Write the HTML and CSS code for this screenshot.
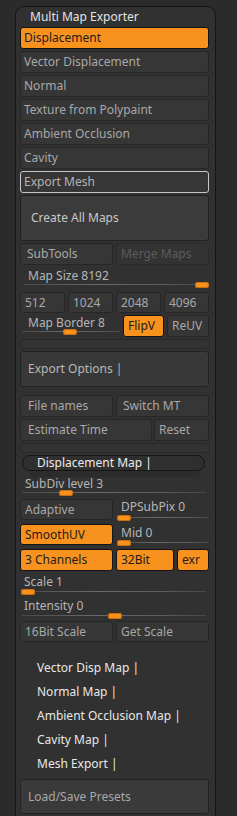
FILE: index.html
```html
<!DOCTYPE html>
<html>
<head>
<meta charset="utf-8">
<link rel="stylesheet" href="styles.css">
</head>
<body>
<div class="panel">
  <div class="title">Multi Map Exporter</div>
  <div class="list">
    <div class="btn on">Displacement</div>
    <div class="btn">Vector Displacement</div>
    <div class="btn">Normal</div>
    <div class="btn">Texture from Polypaint</div>
    <div class="btn">Ambient Occlusion</div>
    <div class="btn">Cavity</div>
    <div class="btn outline">Export Mesh</div>
  </div>
  <div class="btn big mt2">Create All Maps</div>
  <div class="row mt2">
    <div class="btn half pad7">SubTools</div>
    <div class="btn half disabled">Merge Maps</div>
  </div>
  <div class="slider">
    <div class="label mt4 pl8">Map Size 8192</div>
    <div class="track size"><div class="thumb" style="left:175px"></div></div>
  </div>
  <div class="row mt4 gap3">
    <div class="btn quarter">512</div>
    <div class="btn quarter">1024</div>
    <div class="btn quarter">2048</div>
    <div class="btn quarter">4096</div>
  </div>
  <div class="row mt2 gap3">
    <div class="slider grow">
      <div class="label mt1 pl8">Map Border 8</div>
      <div class="track border"><div class="thumb" style="left:43px"></div></div>
    </div>
    <div class="btn on tall w41">FlipV</div>
    <div class="btn tall w42">ReUV</div>
  </div>
  <div class="bar mt2"></div>
  <div class="btn box mt2">Export Options |</div>
  <div class="row mt8">
    <div class="btn half pad8">File names</div>
    <div class="btn half pad7">Switch MT</div>
  </div>
  <div class="row mt2 gap2">
    <div class="btn w132 pad8">Estimate Time</div>
    <div class="btn w55">Reset</div>
  </div>
  <div class="bar mt2"></div>
  <div class="pill mt2">Displacement Map |</div>
  <div class="shade"></div>
  <div class="slider">
    <div class="label pl5">SubDiv level 3</div>
    <div class="track wide"><div class="thumb" style="left:39px"></div></div>
  </div>
  <div class="row mt3">
    <div class="btn half short">Adaptive</div>
    <div class="slider half">
      <div class="label mt1 pl5">DPSubPix 0</div>
      <div class="track side mt1"><div class="thumb" style="left:1px"></div></div>
    </div>
  </div>
  <div class="row mt3">
    <div class="btn half short on">SmoothUV</div>
    <div class="slider half">
      <div class="label mt2 pl5">Mid 0</div>
      <div class="track side"><div class="thumb" style="left:1px"></div></div>
    </div>
  </div>
  <div class="row mt3 gap3">
    <div class="btn half on">3 Channels</div>
    <div class="btn on w58">32Bit</div>
    <div class="btn on w32">exr</div>
  </div>
  <div class="slider">
    <div class="label mt4 pl4">Scale 1</div>
    <div class="track wide"><div class="thumb" style="left:1px"></div></div>
  </div>
  <div class="slider">
    <div class="label mt4 pl4">Intensity 0</div>
    <div class="track wide"><div class="thumb" style="left:88px"></div></div>
  </div>
  <div class="row mt2">
    <div class="btn half short">16Bit Scale</div>
    <div class="btn half short">Get Scale</div>
  </div>
  <div class="sections">
    <div class="section">Vector Disp Map |</div>
    <div class="section">Normal Map |</div>
    <div class="section">Ambient Occlusion Map |</div>
    <div class="section">Cavity Map |</div>
    <div class="section">Mesh Export |</div>
  </div>
  <div class="btn box presets">Load/Save Presets</div>
</div>
</body>
</html>
```

FILE: styles.css
```css
html, body {
  margin: 0;
  padding: 0;
}
body {
  background: #2b2b2b;
  font-family: "Noto Sans", "Open Sans", sans-serif;
  font-size: 12px;
  height: 816px;
  overflow: hidden;
}
.panel {
  margin: 6px 0 0 15px;
  width: 201px;
  height: 810px;
  box-sizing: border-box;
  border: 1px solid #151515;
  border-bottom: 0;
  border-radius: 9px 9px 0 0;
  background: #313131;
  padding: 0 6px 0 4px;
}
.title {
  height: 20px;
  line-height: 20px;
  padding-left: 10px;
  color: #e4e4e4;
}
.list {
  display: flex;
  flex-direction: column;
  gap: 2px;
}
.btn {
  box-sizing: border-box;
  height: 22px;
  line-height: 20px;
  border: 1px solid #262626;
  border-radius: 3px;
  background: #363636;
  color: #a8a8a8;
  padding-left: 3px;
  white-space: nowrap;
  overflow: hidden;
}
.btn.on {
  background: #f8921f;
  border-color: #141414;
  color: #1c1c1c;
}
.btn.outline {
  border-color: #c6c6c6;
  color: #b4b4b4;
}
.btn.disabled {
  color: #5c5c5c;
  background: #333333;
  border-color: #2b2b2b;
}
.btn.big {
  height: 46px;
  line-height: 44px;
  background: #3b3b3b;
  border-color: #222222;
  color: #c8c8c8;
  padding-left: 10px;
}
.btn.box {
  height: 36px;
  line-height: 34px;
  background: #383838;
  border-color: #222222;
  color: #b8b8b8;
  padding-left: 7px;
}
.btn.presets {
  margin-top: 3px;
  height: 35px;
  line-height: 33px;
  background: #3a3a3a;
  color: #a8a8a8;
}
.btn.short {
  height: 21px;
  line-height: 19px;
}
.btn.tall {
  height: 22px;
}
.row {
  display: flex;
  gap: 3px;
}
.row.gap2 { gap: 2px; }
.row.gap3 { gap: 3px; }
.half { width: 93px; flex: none; }
.quarter {
  width: 45px;
  height: 21px;
  line-height: 19px;
  flex: none;
}
.w41 { width: 41px; flex: none; }
.w42 { width: 42px; flex: none; }
.w55 { width: 55px; flex: none; }
.w58 { width: 58px; flex: none; }
.w32 { width: 32px; flex: none; }
.w132 { width: 132px; flex: none; }
.grow { flex: 1; min-width: 0; }
.pad7 { padding-left: 6px; }
.pad8 { padding-left: 7px; }
.btn.half:not(.pad7):not(.pad8),
.btn.quarter,
.btn.w41, .btn.w42, .btn.w55, .btn.w58, .btn.w32 {
  padding-left: 4px;
}
.mt1 { margin-top: 1px; }
.mt2 { margin-top: 2px; }
.mt3 { margin-top: 3px; }
.mt4 { margin-top: 4px; }
.mt8 { margin-top: 8px; }
.pl4 { padding-left: 4px; }
.pl5 { padding-left: 5px; }
.pl8 { padding-left: 8px; }

.slider {
  display: flex;
  flex-direction: column;
}
.label {
  height: 14px;
  line-height: 14px;
  color: #b6b6b6;
  white-space: nowrap;
}
.track {
  position: relative;
  height: 6px;
}
.label + .track { margin-top: -1px; }
.label.mt1 + .track.side { margin-top: 1px; }
.label.mt2 + .track.side { margin-top: 0; }
.label.mt4 + .track.wide { margin-top: 0; }
.track::before {
  content: "";
  position: absolute;
  top: 2px;
  height: 1px;
  left: 2px;
  right: 0;
  background: linear-gradient(90deg, #4a4a4a, #6a6a6a 40%, #5a5a5a 80%, #454545);
}
.track.size::before { left: 4px; right: 4px; }
.track.border::before { left: 2px; right: 0; }
.track.wide::before { left: 2px; right: 3px; }
.track.side::before { left: 2px; right: 0; }
.thumb {
  position: absolute;
  top: 0;
  width: 14px;
  height: 6px;
  border-radius: 3px;
  background: #f8921f;
  box-shadow: inset 0 0 0 1px #c86e10;
}
.bar {
  box-sizing: border-box;
  height: 10px;
  border: 1px solid #272727;
  border-radius: 4px;
  background: #333333;
}
.pill {
  box-sizing: border-box;
  height: 16px;
  line-height: 14px;
  margin-left: 2px;
  margin-right: 4px;
  border: 1px solid #151515;
  border-radius: 8px;
  background: #2f2f2f;
  color: #ececec;
  padding-left: 14px;
}
.shade {
  height: 6px;
  margin: 0 10px 0 9px;
  background: #2c2c2c;
}
.sections {
  margin-top: 14px;
  display: flex;
  flex-direction: column;
}
.section {
  height: 24px;
  line-height: 24px;
  padding-left: 17px;
  color: #e8e8e8;
}
```
